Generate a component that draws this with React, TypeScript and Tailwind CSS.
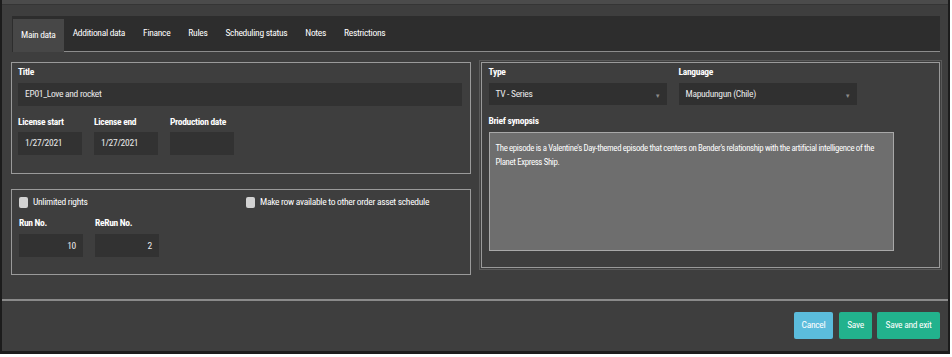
const font = "font-['Liberation_Sans_Narrow','Roboto_Condensed','Liberation_Sans',sans-serif] tracking-[-0.3px]";

const tabs = ['Main data', 'Additional data', 'Finance', 'Rules', 'Scheduling status', 'Notes', 'Restrictions'];

function Label({ children }: { children: React.ReactNode }) {
  return <div className="h-[12px] text-[9.5px] leading-[12px] font-bold text-white">{children}</div>;
}

function Field({ value, right, className = '' }: { value?: string; right?: boolean; className?: string }) {
  return (
    <div
      className={`h-[23px] bg-[#323232] text-[9.5px] text-[#eaeaea] flex items-center px-[7px] ${
        right ? 'justify-end' : ''
      } ${className}`}
    >
      {value}
    </div>
  );
}

function Select({ value }: { value: string }) {
  return (
    <div className="h-[22px] w-[178px] bg-[#303030] text-[9.5px] text-[#eaeaea] flex items-center justify-between pl-[7px] pr-[6px]">
      <span>{value}</span>
      <span className="text-[6px] text-[#8a8a8a] mt-[3px]">▼</span>
    </div>
  );
}

function Check({ label }: { label: string }) {
  return (
    <div className="flex items-center gap-[5px]">
      <div className="w-[9px] h-[11px] rounded-[2px] bg-[#d2d2d2]" />
      <span className="text-[9.5px] text-white">{label}</span>
    </div>
  );
}

export default function App() {
  return (
    <div className={`w-[950px] h-[354px] bg-[#3e3e3e] border-l-2 border-r-2 border-b-[3px] border-[#1c1c1c] flex flex-col ${font}`}>
      {/* top strip */}
      <div className="h-[5px] bg-[#4b4b4b] border-b border-[#353535]" />

      {/* tabs */}
      <div className="mt-[11px] ml-[10px] mr-[8px] h-[36px] bg-[#2d2d2d] flex items-end">
        {tabs.map((t, i) =>
          i === 0 ? (
            <div key={t} className="h-[33px] ml-[1px] px-[8px] bg-[#474747] flex items-center text-[9.5px] text-white">
              {t}
            </div>
          ) : (
            <div key={t} className="h-[36px] px-[9px] flex items-center text-[9.5px] text-white border-b border-[#8c8c8c] pb-[1px]">
              {t}
            </div>
          )
        )}
        <div className="flex-1 h-[36px] border-b border-[#8c8c8c]" />
      </div>

      {/* content */}
      <div className="mt-[10px] ml-[9px] mr-[8px] flex gap-[10px] items-start">
        <div className="w-[460px] flex flex-col gap-[15px]">
          <div className="border border-[#9a9a9a] h-[112px] pl-[6px] pr-[8px] pt-[3px]">
            <Label>Title</Label>
            <Field value="EP01_Love and rocket" className="mt-[5px]" />
            <div className="flex gap-[12px] mt-[10px]">
              {[
                ['License start', '1/27/2021'],
                ['License end', '1/27/2021'],
                ['Production date', ''],
              ].map(([l, v]) => (
                <div key={l} className="w-[64px]">
                  <Label>{l}</Label>
                  <Field value={v} className="mt-[4px]" />
                </div>
              ))}
            </div>
          </div>
          <div className="border border-[#9a9a9a] h-[86px] pl-[7px] pr-[8px] pt-[5px]">
            <div className="flex">
              <div className="w-[227px]">
                <Check label="Unlimited rights" />
              </div>
              <Check label="Make row available to other order asset schedule" />
            </div>
            <div className="flex gap-[12px] mt-[8px]">
              {[
                ['Run No.', '10'],
                ['ReRun No.', '2'],
              ].map(([l, v]) => (
                <div key={l} className="w-[64px]">
                  <Label>{l}</Label>
                  <Field value={v} right className="mt-[5px]" />
                </div>
              ))}
            </div>
          </div>
        </div>

        <div className="w-[460px] h-[206px] border border-[#9a9a9a] outline outline-1 outline-offset-[1px] outline-[#5a5a5a] pl-[7px] pt-[3px]">
          <div className="flex gap-[12px]">
            <div>
              <Label>Type</Label>
              <div className="mt-[5px]">
                <Select value="TV - Series" />
              </div>
            </div>
            <div>
              <Label>Language</Label>
              <div className="mt-[5px]">
                <Select value="Mapudungun (Chile)" />
              </div>
            </div>
          </div>
          <div className="mt-[10px]">
            <Label>Brief synopsis</Label>
          </div>
          <div className="mt-[5px] w-[405px] h-[119px] bg-[#6e6e6e] border border-[#a8a8a8] pl-[6px] pr-[2px] py-[8px] text-[8.8px] tracking-[-0.35px] leading-[14px] text-white">
            The episode is a Valentine's Day-themed episode that centers on Bender's relationship with the artificial intelligence of the Planet Express Ship.
          </div>
        </div>
      </div>

      <div className="flex-1" />

      {/* footer */}
      <div className="border-t-2 border-[#8a8a8a] h-[52px] flex justify-end items-start pt-[11px] pr-[8px] gap-[5px]">
        <button className="h-[27px] w-[39px] mr-[1px] rounded-[2px] bg-[#5bbcdc] text-[9.5px] text-white">Cancel</button>
        <button className="h-[27px] w-[33px] rounded-[2px] bg-[#22b28d] text-[9.5px] text-white">Save</button>
        <button className="h-[27px] w-[63px] rounded-[2px] bg-[#22b28d] text-[9.5px] text-white">Save and exit</button>
      </div>
    </div>
  );
}
